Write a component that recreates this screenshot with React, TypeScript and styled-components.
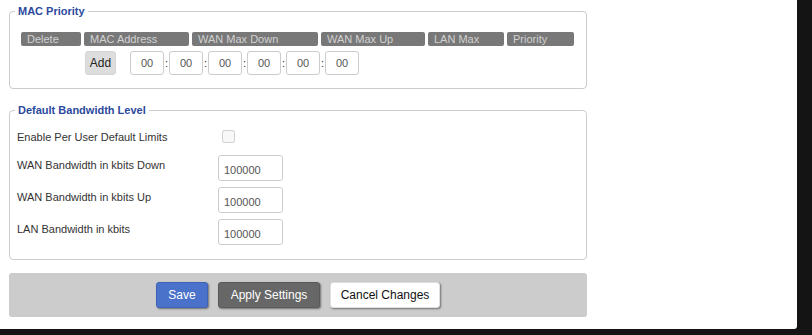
import React, { FC } from "react";
import styled, { createGlobalStyle } from "styled-components";

const GlobalStyle = createGlobalStyle`
  html, body {
    margin: 0;
    padding: 0;
    background: #141414;
  }
  body {
    font-family: "Liberation Sans", Arial, sans-serif;
    font-size: 11px;
    color: #333;
  }
`;

const Page = styled.div`
  width: 797px;
  height: 329px;
  box-sizing: border-box;
  background: #fff;
  border-bottom-right-radius: 3px;
  padding: 5px 0 0 9px;
  overflow: hidden;
`;

const Section = styled.fieldset<{ $mt?: number }>`
  width: 578px;
  box-sizing: border-box;
  margin: ${(p) => p.$mt ?? 0}px 0 0 0;
  border: 1px solid #ccc;
  border-radius: 4px;
  padding: 0;
  min-width: 0;
`;

const Legend = styled.legend`
  margin-left: 5px;
  padding: 0 3px;
  font-size: 11px;
  line-height: 13px;
  font-weight: bold;
  color: #2c4a9e;
`;

const MacBody = styled.div`
  padding: 14px 0 13px 11px;
`;

const HeadRow = styled.div`
  display: flex;
  gap: 3px;
`;

const HeadCell = styled.div<{ $w: number }>`
  width: ${(p) => p.$w}px;
  height: 14px;
  box-sizing: border-box;
  padding-left: 6px;
  background: #787878;
  border-radius: 2px;
  color: #d2d2d2;
  font-size: 11px;
  line-height: 14px;
`;

const EntryRow = styled.div`
  display: flex;
  align-items: center;
  margin-top: 5px;
  padding-left: 64px;
`;

const AddButton = styled.button`
  width: 31px;
  height: 24px;
  padding: 0;
  border: 1px solid #d6d6d6;
  border-radius: 3px;
  background: #ddd;
  color: #222;
  font-family: inherit;
  font-size: 12px;
  margin-right: 14px;
`;

const Octet = styled.input`
  width: 34px;
  height: 24px;
  box-sizing: border-box;
  border: 1px solid #ccc;
  border-radius: 3px;
  text-align: center;
  font-family: inherit;
  font-size: 11px;
  color: #555;
  padding: 0;
  outline: none;
`;

const Colon = styled.span`
  width: 5px;
  text-align: center;
  color: #333;
  font-size: 11px;
`;

const BandBody = styled.div`
  padding: 10px 8px 14px 7px;
`;

const Row = styled.div<{ $h: number }>`
  display: flex;
  align-items: flex-start;
  height: ${(p) => p.$h}px;
`;

const Label = styled.div`
  width: 201px;
  padding-top: 4px;
  font-size: 11px;
  line-height: 13px;
  color: #333;
`;

const Check = styled.input`
  margin: 3px 0 0 4px;
  width: 13px;
  height: 13px;
  accent-color: #ccc;
`;

const NumInput = styled.input`
  width: 65px;
  height: 26px;
  box-sizing: border-box;
  border: 1px solid #ccc;
  border-radius: 3px;
  padding: 3px 0 0 5px;
  font-family: inherit;
  font-size: 11px;
  color: #555;
  outline: none;
`;

const ButtonBar = styled.div`
  width: 578px;
  height: 44px;
  margin-top: 13px;
  background: #ccc;
  border-radius: 3px;
  display: flex;
  justify-content: center;
  align-items: center;
  gap: 10px;
`;

const variants = {
  save: { bg: "#4a72cb", fg: "#fff", border: "#3f63b5" },
  apply: { bg: "#676767", fg: "#fff", border: "#5a5a5a" },
  cancel: { bg: "#fff", fg: "#111", border: "#e0e0e0" },
};

const BarButton = styled.button<{ $kind: keyof typeof variants; $w: number }>`
  width: ${(p) => p.$w}px;
  height: 26px;
  padding: 0;
  border: 1px solid ${(p) => variants[p.$kind].border};
  border-radius: 3px;
  background: ${(p) => variants[p.$kind].bg};
  color: ${(p) => variants[p.$kind].fg};
  font-family: inherit;
  font-size: 12px;
  box-shadow: 1px 1px 2px rgba(0, 0, 0, 0.45);
`;

const heads: [string, number][] = [
  ["Delete", 60],
  ["MAC Address", 105],
  ["WAN Max Down", 126],
  ["WAN Max Up", 104],
  ["LAN Max", 76],
  ["Priority", 67],
];

const limits = [
  "WAN Bandwidth in kbits Down",
  "WAN Bandwidth in kbits Up",
  "LAN Bandwidth in kbits",
];

export const App: FC = () => {
  return (
    <Page>
      <GlobalStyle />
      <Section>
        <Legend>MAC Priority</Legend>
        <MacBody>
          <HeadRow>
            {heads.map(([t, w]) => (
              <HeadCell key={t} $w={w}>
                {t}
              </HeadCell>
            ))}
          </HeadRow>
          <EntryRow>
            <AddButton>Add</AddButton>
            {[0, 1, 2, 3, 4, 5].map((i) => (
              <React.Fragment key={i}>
                {i > 0 && <Colon>:</Colon>}
                <Octet defaultValue="00" />
              </React.Fragment>
            ))}
          </EntryRow>
        </MacBody>
      </Section>

      <Section $mt={15}>
        <Legend>Default Bandwidth Level</Legend>
        <BandBody>
          <Row $h={28}>
            <Label>Enable Per User Default Limits</Label>
            <Check type="checkbox" disabled />
          </Row>
          {limits.map((l, i) => (
            <Row key={l} $h={i === limits.length - 1 ? 26 : 32}>
              <Label>{l}</Label>
              <NumInput defaultValue="100000" />
            </Row>
          ))}
        </BandBody>
      </Section>

      <ButtonBar>
        <BarButton $kind="save" $w={52}>
          Save
        </BarButton>
        <BarButton $kind="apply" $w={102}>
          Apply Settings
        </BarButton>
        <BarButton $kind="cancel" $w={110}>
          Cancel Changes
        </BarButton>
      </ButtonBar>
    </Page>
  );
};

export default App;
